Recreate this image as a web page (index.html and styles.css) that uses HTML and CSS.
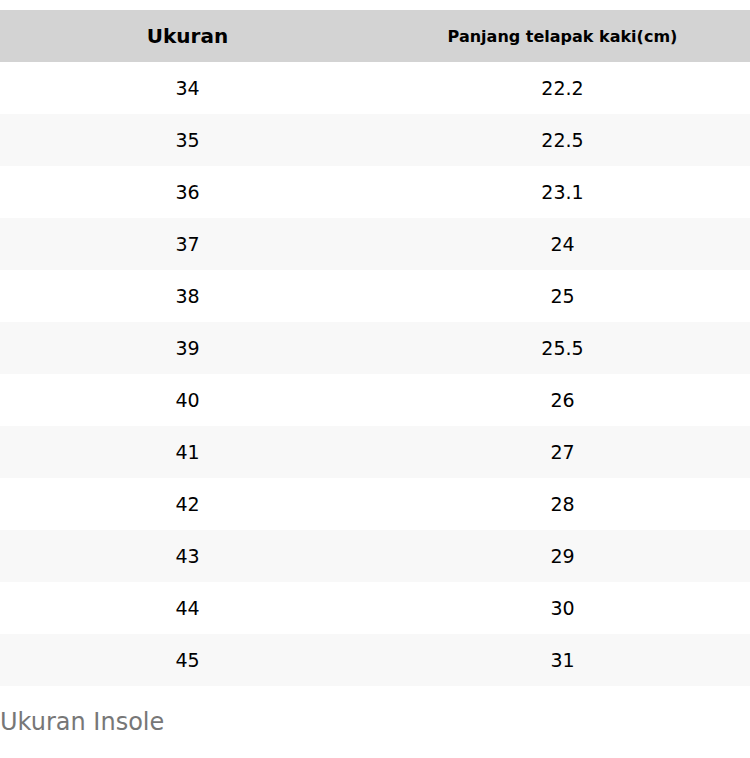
FILE: index.html
```html
<!DOCTYPE html>
<html>
<head>
<meta charset="utf-8">
<link rel="stylesheet" href="styles.css">
</head>
<body>
<div class="page">
  <table class="size-table">
    <thead>
      <tr>
        <th class="h-main">Ukuran</th>
        <th class="h-sub">Panjang telapak kaki(cm)</th>
      </tr>
    </thead>
    <tbody>
      <tr><td>34</td><td>22.2</td></tr>
      <tr><td>35</td><td>22.5</td></tr>
      <tr><td>36</td><td>23.1</td></tr>
      <tr><td>37</td><td>24</td></tr>
      <tr><td>38</td><td>25</td></tr>
      <tr><td>39</td><td>25.5</td></tr>
      <tr><td>40</td><td>26</td></tr>
      <tr><td>41</td><td>27</td></tr>
      <tr><td>42</td><td>28</td></tr>
      <tr><td>43</td><td>29</td></tr>
      <tr><td>44</td><td>30</td></tr>
      <tr><td>45</td><td>31</td></tr>
    </tbody>
  </table>
  <p class="caption">Ukuran Insole</p>
</div>
</body>
</html>
```
FILE: styles.css
```css
html, body {
  margin: 0;
  padding: 0;
  background: #ffffff;
}
body {
  font-family: "DejaVu Sans", sans-serif;
  color: #000;
}
.page {
  padding-top: 10px;
}
.size-table {
  width: 750px;
  border-collapse: collapse;
  table-layout: fixed;
}
.size-table th,
.size-table td {
  width: 50%;
  height: 52px;
  padding: 0;
  text-align: center;
  vertical-align: middle;
}
.size-table thead tr {
  background: #d3d3d3;
}
.h-main {
  font-size: 20px;
  font-weight: bold;
}
.h-sub {
  font-size: 16px;
  font-weight: bold;
}
.size-table td {
  font-size: 19px;
}
.size-table tbody tr:nth-child(even) {
  background: #f8f8f8;
}
.caption {
  margin: 22px 0 0 0;
  font-size: 24px;
  line-height: 28px;
  color: #777777;
}
```
